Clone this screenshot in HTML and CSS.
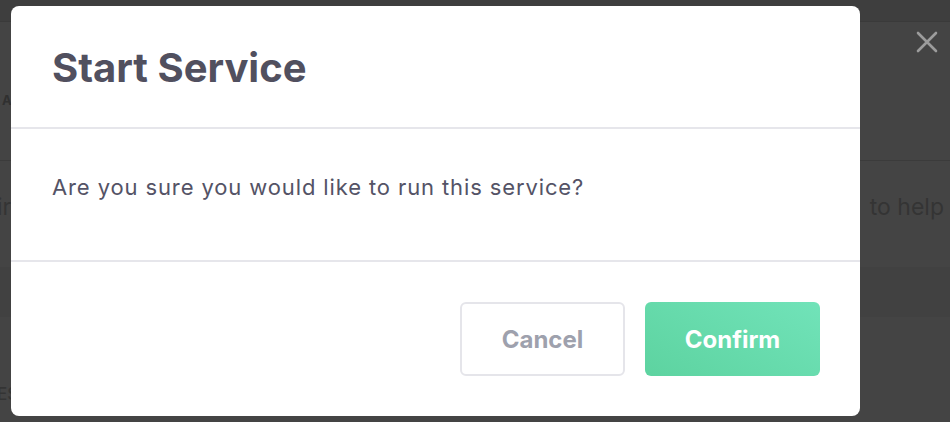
FILE: index.html
```html
<!DOCTYPE html>
<html lang="en">
<head>
<meta charset="utf-8">
<title>Start Service</title>
<link rel="stylesheet" href="styles.css">
</head>
<body>
<div class="page">
  <div class="topbar"></div>
  <div class="section">
    <span class="label">A</span>
  </div>
  <div class="row">
    <span class="cut">ir</span>
    <span class="help">to help</span>
  </div>
  <div class="band"></div>
  <div class="foot"><span class="label2">ES</span></div>
</div>

<div class="overlay">
  <button class="close" aria-label="Close">
    <svg width="22" height="22" viewBox="0 0 22 22"><path d="M2 2 L20 20 M20 2 L2 20" stroke="#9c9c9c" stroke-width="2.6" stroke-linecap="round" fill="none"/></svg>
  </button>
  <div class="modal">
    <div class="modal-header">
      <h1 class="title">Start Service</h1>
    </div>
    <div class="modal-body">
      <p class="message">Are you sure you would like to run this service?</p>
    </div>
    <div class="modal-footer">
      <button class="btn btn-cancel">Cancel</button>
      <button class="btn btn-confirm">Confirm</button>
    </div>
  </div>
</div>
</body>
</html>
```
FILE: styles.css
```css
* { box-sizing: border-box; }
html, body { margin: 0; padding: 0; }
body {
  width: 950px;
  height: 422px;
  overflow: hidden;
  background: #444444;
  font-family: Inter, "Noto Sans", "Liberation Sans", sans-serif;
  position: relative;
}
.page { display: flex; flex-direction: column; }
.topbar { height: 22px; background: #3e3e3e; border-bottom: 1px solid #3a3a3a; }
.section { height: 139px; border-bottom: 1px solid #3b3b3b; padding-top: 70px; }
.label { display: block; font-weight: 700; font-size: 13px; color: #303030; padding-left: 2px; line-height: 16px; }
.row { height: 106px; display: flex; justify-content: space-between; align-items: flex-start; padding: 32px 6px 0 0; font-size: 23px; color: #343434; white-space: nowrap; }
.cut { margin-left: -3px; }
.band { height: 50px; background: #414141; }
.foot { padding-top: 67px; }
.label2 { display: block; font-weight: 500; font-size: 17px; color: #343434; margin-left: -3px; line-height: 20px; }

.overlay {
  position: absolute;
  inset: 0;
  padding: 6px 0 0 11px;
}
.close {
  position: absolute;
  top: 31px;
  left: 916px;
  width: 22px;
  height: 22px;
  padding: 0;
  border: 0;
  background: transparent;
  display: block;
}
.close svg { display: block; }
.modal {
  width: 849px;
  height: 410px;
  background: #ffffff;
  border-radius: 8px;
  display: flex;
  flex-direction: column;
}
.modal-header {
  height: 123px;
  padding: 38px 41px 0;
  border-bottom: 2px solid #e6e6eb;
  flex: none;
}
.title {
  margin: 0;
  font-size: 40px;
  line-height: 48px;
  font-weight: 700;
  color: #51505f;
}
.modal-body {
  padding: 44px 41px 0;
  height: 133px;
  border-bottom: 2px solid #e6e6eb;
  flex: none;
}
.message {
  margin: 0;
  font-size: 22px;
  line-height: 28px;
  letter-spacing: 0.88px;
  color: #545366;
}
.modal-footer {
  flex: 1;
  display: flex;
  justify-content: flex-end;
  align-items: flex-start;
  gap: 20px;
  padding: 40px 40px 0;
}
.btn {
  height: 74px;
  border-radius: 6px;
  font-family: inherit;
  font-size: 24px;
  font-weight: 700;
  cursor: pointer;
}
.btn-cancel {
  width: 165px;
  background: #ffffff;
  border: 2px solid #e5e5ea;
  color: #9ea1ad;
}
.btn-confirm {
  width: 175px;
  border: 0;
  color: #ffffff;
  background: linear-gradient(30deg, #5dd3a0 0%, #71e3b9 100%);
}
```
